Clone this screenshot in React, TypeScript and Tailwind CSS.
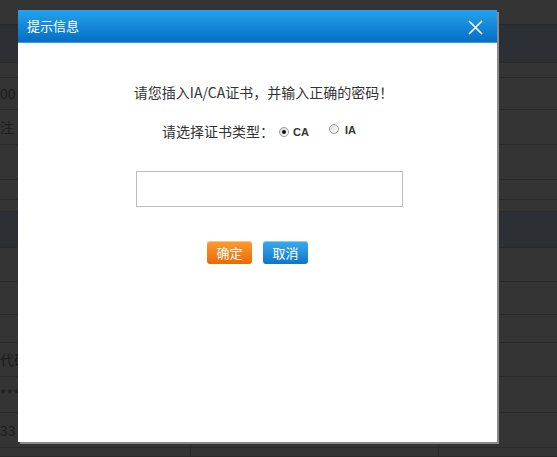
import React from "react";

const font = { fontFamily: "'Noto Sans CJK SC', 'Liberation Sans', sans-serif" };

const rows = [
  { h: "h-[25px]", dark: false, text: "", ml: "" },
  { h: "h-[38px]", dark: true, text: "", ml: "" },
  { h: "h-[15px]", dark: false, text: "", ml: "" },
  { h: "h-[32px]", dark: false, text: "00", ml: "ml-[0px]" },
  { h: "h-[35px]", dark: false, text: "注", ml: "ml-[0px]" },
  { h: "h-[35px]", dark: false, text: "", ml: "" },
  { h: "h-[20px]", dark: false, text: "", ml: "" },
  { h: "h-[12px]", dark: false, text: "", ml: "" },
  { h: "h-[36px]", dark: true, text: "", ml: "" },
  { h: "h-[34px]", dark: false, text: "", ml: "" },
  { h: "h-[33px]", dark: false, text: "", ml: "" },
  { h: "h-[28px]", dark: false, text: "", ml: "" },
  { h: "h-[34px]", dark: false, text: "代码", ml: "ml-[0px]" },
  { h: "h-[36px]", dark: false, text: "***", ml: "ml-[0px]" },
  { h: "h-[35px]", dark: false, text: "33", ml: "ml-[0px]" },
  { h: "h-[9px]", dark: false, text: "", ml: "" },
];

function Radio({ checked }: { checked?: boolean }) {
  return (
    <span className="w-[10px] h-[10px] rounded-full border border-[#9a9a9a] bg-gradient-to-br from-[#dcdcdc] to-white flex items-center justify-center">
      {checked && <span className="w-[4px] h-[4px] rounded-full bg-[#111]" />}
    </span>
  );
}

export default function App() {
  return (
    <div className="relative w-[557px] h-[457px] overflow-hidden bg-[#343434]" style={font}>
      <div className="flex flex-col">
        {rows.map((r, i) => (
          <div
            key={i}
            className={`${r.h} border-b border-[#2a2a2a] flex items-center ${r.dark ? "bg-[#2c2f33]" : ""}`}
          >
            {r.text && (
              <span className={`${r.ml} text-[14px] text-[#1c1c1c] whitespace-nowrap`}>{r.text}</span>
            )}
          </div>
        ))}
      </div>
      <div className="absolute left-[190px] top-[442px] h-[15px] border-l border-[#2a2a2a]" />
      <div className="absolute left-[438px] top-[442px] h-[15px] border-l border-[#2a2a2a]" />

      <div className="absolute left-[18px] top-[10px] w-[479px] h-[432px] bg-white flex flex-col shadow-[2px_2px_0_#8a8a8a]">
        <div className="relative h-[33px] shrink-0 bg-gradient-to-b from-[#24a3ec] to-[#066ec5] border-b border-[#3c9be0] flex items-center pl-[9px]">
          <span className="text-[13px] text-white">提示信息</span>
          <svg
            className="absolute left-[450px] top-[10px]"
            width="15"
            height="15"
            viewBox="0 0 15 15"
          >
            <path d="M1 1 L14 14 M14 1 L1 14" stroke="white" strokeWidth="1.6" />
          </svg>
        </div>

        <div className="flex flex-col items-center pt-[40px] text-[14px] text-[#333]">
          <p className="leading-[18px] ml-[12px]">请您插入IA/CA证书，并输入正确的密码！</p>

          <div className="mt-[20px] flex items-center ml-[3px] leading-[18px]">
            <span>请选择证书类型：</span>
            <span className="ml-[5px] mt-[1px]">
              <Radio checked />
            </span>
            <span className="ml-[4px] mt-[2px] text-[11px] font-bold text-[#333]" style={{ fontFamily: "'Liberation Sans', sans-serif" }}>
              CA
            </span>
            <span className="ml-[20px] mt-[-5px]">
              <Radio />
            </span>
            <span className="ml-[6px] mt-[-2px] text-[11px] font-bold text-[#333]" style={{ fontFamily: "'Liberation Sans', sans-serif" }}>
              IA
            </span>
          </div>

          <input
            type="password"
            className="mt-[30px] ml-[24px] w-[267px] h-[36px] border border-[#bdbdbd] outline-none"
          />

          <div className="mt-[34px] flex gap-[11px]">
            <button className="w-[45px] h-[23px] rounded-[3px] bg-gradient-to-b from-[#ff9a2e] to-[#e96b00] text-white text-[13px] leading-[23px] shadow-[inset_0_1px_0_rgba(255,255,255,0.4)]">
              确定
            </button>
            <button className="w-[45px] h-[23px] rounded-[3px] bg-gradient-to-b from-[#3aaaf0] to-[#0f76c8] text-white text-[13px] leading-[23px] shadow-[inset_0_1px_0_rgba(255,255,255,0.4)]">
              取消
            </button>
          </div>
        </div>
      </div>
    </div>
  );
}
